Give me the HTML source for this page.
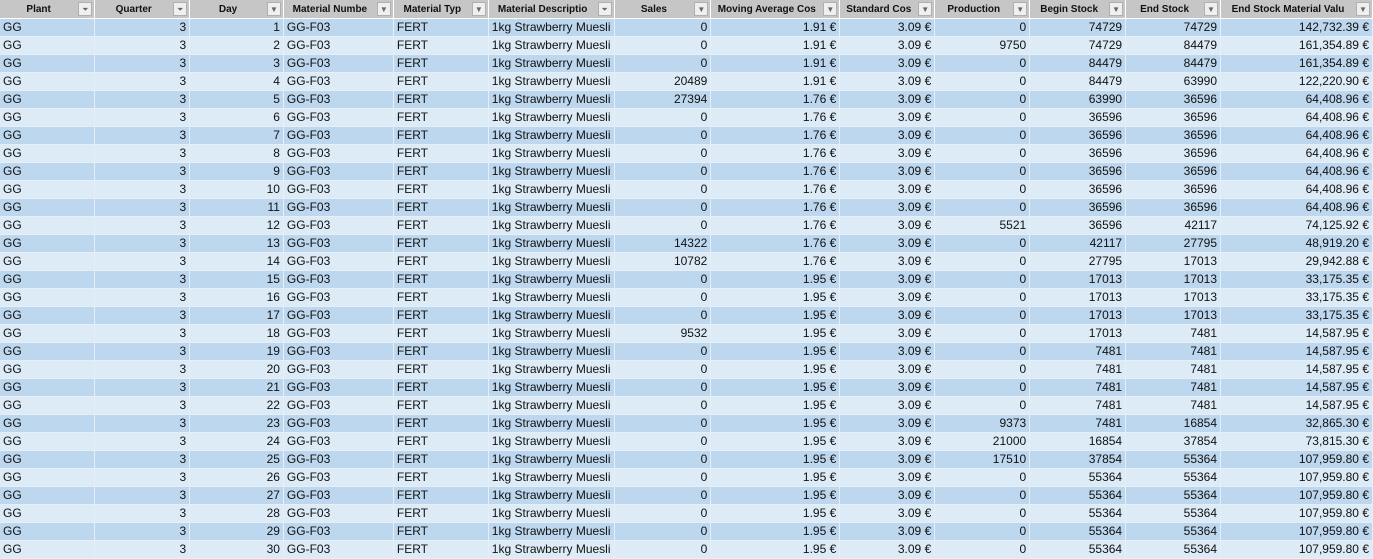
<!DOCTYPE html>
<html><head><meta charset="utf-8"><style>
body{margin:0;background:#fff;width:1373px;height:558px;overflow:hidden}
table{border-collapse:collapse;table-layout:fixed;font-family:"Liberation Sans",sans-serif;font-size:12px;color:#111}
td,th{height:17px;padding:0 3px;white-space:nowrap;overflow:hidden;border-right:1px solid #e6eef8;border-bottom:1px solid #e6eef8;line-height:17px}
th{background:#c6c6c6;font-weight:bold;font-size:10px;height:18px;text-align:center;position:relative;padding-right:20px;border-right:1px solid #fff;border-bottom:1px solid #fff}
th span{position:absolute;right:2px;top:2px;width:14px;height:14px;background:#efefef;border:1px solid #b0b0b0;box-sizing:border-box;font-size:8px;line-height:13px;text-align:center;color:#666;font-weight:normal}
tr:nth-child(even) td{background:#bdd7ee}
tr:nth-child(odd) td{background:#ddebf7}
.r{text-align:right}
</style></head><body>
<table>
<colgroup><col style="width:95px"><col style="width:95px"><col style="width:94px"><col style="width:110px"><col style="width:95px"><col style="width:125px"><col style="width:97px"><col style="width:129px"><col style="width:95px"><col style="width:95px"><col style="width:96px"><col style="width:95px"><col style="width:152px"></colgroup>
<tr><th>Plant<span>⏷</span></th><th>Quarter<span>⏷</span></th><th>Day<span>▼</span></th><th>Material Numbe<span>▼</span></th><th>Material Typ<span>▼</span></th><th>Material Descriptio<span>⏷</span></th><th>Sales<span>▼</span></th><th>Moving Average Cos<span>▼</span></th><th>Standard Cos<span>▼</span></th><th>Production<span>▼</span></th><th>Begin Stock<span>▼</span></th><th>End Stock<span>▼</span></th><th>End Stock Material Valu<span>▼</span></th></tr>
<tr><td>GG</td><td class="r">3</td><td class="r">1</td><td>GG-F03</td><td>FERT</td><td>1kg Strawberry Muesli</td><td class="r">0</td><td class="r">1.91 €</td><td class="r">3.09 €</td><td class="r">0</td><td class="r">74729</td><td class="r">74729</td><td class="r">142,732.39 €</td></tr>
<tr><td>GG</td><td class="r">3</td><td class="r">2</td><td>GG-F03</td><td>FERT</td><td>1kg Strawberry Muesli</td><td class="r">0</td><td class="r">1.91 €</td><td class="r">3.09 €</td><td class="r">9750</td><td class="r">74729</td><td class="r">84479</td><td class="r">161,354.89 €</td></tr>
<tr><td>GG</td><td class="r">3</td><td class="r">3</td><td>GG-F03</td><td>FERT</td><td>1kg Strawberry Muesli</td><td class="r">0</td><td class="r">1.91 €</td><td class="r">3.09 €</td><td class="r">0</td><td class="r">84479</td><td class="r">84479</td><td class="r">161,354.89 €</td></tr>
<tr><td>GG</td><td class="r">3</td><td class="r">4</td><td>GG-F03</td><td>FERT</td><td>1kg Strawberry Muesli</td><td class="r">20489</td><td class="r">1.91 €</td><td class="r">3.09 €</td><td class="r">0</td><td class="r">84479</td><td class="r">63990</td><td class="r">122,220.90 €</td></tr>
<tr><td>GG</td><td class="r">3</td><td class="r">5</td><td>GG-F03</td><td>FERT</td><td>1kg Strawberry Muesli</td><td class="r">27394</td><td class="r">1.76 €</td><td class="r">3.09 €</td><td class="r">0</td><td class="r">63990</td><td class="r">36596</td><td class="r">64,408.96 €</td></tr>
<tr><td>GG</td><td class="r">3</td><td class="r">6</td><td>GG-F03</td><td>FERT</td><td>1kg Strawberry Muesli</td><td class="r">0</td><td class="r">1.76 €</td><td class="r">3.09 €</td><td class="r">0</td><td class="r">36596</td><td class="r">36596</td><td class="r">64,408.96 €</td></tr>
<tr><td>GG</td><td class="r">3</td><td class="r">7</td><td>GG-F03</td><td>FERT</td><td>1kg Strawberry Muesli</td><td class="r">0</td><td class="r">1.76 €</td><td class="r">3.09 €</td><td class="r">0</td><td class="r">36596</td><td class="r">36596</td><td class="r">64,408.96 €</td></tr>
<tr><td>GG</td><td class="r">3</td><td class="r">8</td><td>GG-F03</td><td>FERT</td><td>1kg Strawberry Muesli</td><td class="r">0</td><td class="r">1.76 €</td><td class="r">3.09 €</td><td class="r">0</td><td class="r">36596</td><td class="r">36596</td><td class="r">64,408.96 €</td></tr>
<tr><td>GG</td><td class="r">3</td><td class="r">9</td><td>GG-F03</td><td>FERT</td><td>1kg Strawberry Muesli</td><td class="r">0</td><td class="r">1.76 €</td><td class="r">3.09 €</td><td class="r">0</td><td class="r">36596</td><td class="r">36596</td><td class="r">64,408.96 €</td></tr>
<tr><td>GG</td><td class="r">3</td><td class="r">10</td><td>GG-F03</td><td>FERT</td><td>1kg Strawberry Muesli</td><td class="r">0</td><td class="r">1.76 €</td><td class="r">3.09 €</td><td class="r">0</td><td class="r">36596</td><td class="r">36596</td><td class="r">64,408.96 €</td></tr>
<tr><td>GG</td><td class="r">3</td><td class="r">11</td><td>GG-F03</td><td>FERT</td><td>1kg Strawberry Muesli</td><td class="r">0</td><td class="r">1.76 €</td><td class="r">3.09 €</td><td class="r">0</td><td class="r">36596</td><td class="r">36596</td><td class="r">64,408.96 €</td></tr>
<tr><td>GG</td><td class="r">3</td><td class="r">12</td><td>GG-F03</td><td>FERT</td><td>1kg Strawberry Muesli</td><td class="r">0</td><td class="r">1.76 €</td><td class="r">3.09 €</td><td class="r">5521</td><td class="r">36596</td><td class="r">42117</td><td class="r">74,125.92 €</td></tr>
<tr><td>GG</td><td class="r">3</td><td class="r">13</td><td>GG-F03</td><td>FERT</td><td>1kg Strawberry Muesli</td><td class="r">14322</td><td class="r">1.76 €</td><td class="r">3.09 €</td><td class="r">0</td><td class="r">42117</td><td class="r">27795</td><td class="r">48,919.20 €</td></tr>
<tr><td>GG</td><td class="r">3</td><td class="r">14</td><td>GG-F03</td><td>FERT</td><td>1kg Strawberry Muesli</td><td class="r">10782</td><td class="r">1.76 €</td><td class="r">3.09 €</td><td class="r">0</td><td class="r">27795</td><td class="r">17013</td><td class="r">29,942.88 €</td></tr>
<tr><td>GG</td><td class="r">3</td><td class="r">15</td><td>GG-F03</td><td>FERT</td><td>1kg Strawberry Muesli</td><td class="r">0</td><td class="r">1.95 €</td><td class="r">3.09 €</td><td class="r">0</td><td class="r">17013</td><td class="r">17013</td><td class="r">33,175.35 €</td></tr>
<tr><td>GG</td><td class="r">3</td><td class="r">16</td><td>GG-F03</td><td>FERT</td><td>1kg Strawberry Muesli</td><td class="r">0</td><td class="r">1.95 €</td><td class="r">3.09 €</td><td class="r">0</td><td class="r">17013</td><td class="r">17013</td><td class="r">33,175.35 €</td></tr>
<tr><td>GG</td><td class="r">3</td><td class="r">17</td><td>GG-F03</td><td>FERT</td><td>1kg Strawberry Muesli</td><td class="r">0</td><td class="r">1.95 €</td><td class="r">3.09 €</td><td class="r">0</td><td class="r">17013</td><td class="r">17013</td><td class="r">33,175.35 €</td></tr>
<tr><td>GG</td><td class="r">3</td><td class="r">18</td><td>GG-F03</td><td>FERT</td><td>1kg Strawberry Muesli</td><td class="r">9532</td><td class="r">1.95 €</td><td class="r">3.09 €</td><td class="r">0</td><td class="r">17013</td><td class="r">7481</td><td class="r">14,587.95 €</td></tr>
<tr><td>GG</td><td class="r">3</td><td class="r">19</td><td>GG-F03</td><td>FERT</td><td>1kg Strawberry Muesli</td><td class="r">0</td><td class="r">1.95 €</td><td class="r">3.09 €</td><td class="r">0</td><td class="r">7481</td><td class="r">7481</td><td class="r">14,587.95 €</td></tr>
<tr><td>GG</td><td class="r">3</td><td class="r">20</td><td>GG-F03</td><td>FERT</td><td>1kg Strawberry Muesli</td><td class="r">0</td><td class="r">1.95 €</td><td class="r">3.09 €</td><td class="r">0</td><td class="r">7481</td><td class="r">7481</td><td class="r">14,587.95 €</td></tr>
<tr><td>GG</td><td class="r">3</td><td class="r">21</td><td>GG-F03</td><td>FERT</td><td>1kg Strawberry Muesli</td><td class="r">0</td><td class="r">1.95 €</td><td class="r">3.09 €</td><td class="r">0</td><td class="r">7481</td><td class="r">7481</td><td class="r">14,587.95 €</td></tr>
<tr><td>GG</td><td class="r">3</td><td class="r">22</td><td>GG-F03</td><td>FERT</td><td>1kg Strawberry Muesli</td><td class="r">0</td><td class="r">1.95 €</td><td class="r">3.09 €</td><td class="r">0</td><td class="r">7481</td><td class="r">7481</td><td class="r">14,587.95 €</td></tr>
<tr><td>GG</td><td class="r">3</td><td class="r">23</td><td>GG-F03</td><td>FERT</td><td>1kg Strawberry Muesli</td><td class="r">0</td><td class="r">1.95 €</td><td class="r">3.09 €</td><td class="r">9373</td><td class="r">7481</td><td class="r">16854</td><td class="r">32,865.30 €</td></tr>
<tr><td>GG</td><td class="r">3</td><td class="r">24</td><td>GG-F03</td><td>FERT</td><td>1kg Strawberry Muesli</td><td class="r">0</td><td class="r">1.95 €</td><td class="r">3.09 €</td><td class="r">21000</td><td class="r">16854</td><td class="r">37854</td><td class="r">73,815.30 €</td></tr>
<tr><td>GG</td><td class="r">3</td><td class="r">25</td><td>GG-F03</td><td>FERT</td><td>1kg Strawberry Muesli</td><td class="r">0</td><td class="r">1.95 €</td><td class="r">3.09 €</td><td class="r">17510</td><td class="r">37854</td><td class="r">55364</td><td class="r">107,959.80 €</td></tr>
<tr><td>GG</td><td class="r">3</td><td class="r">26</td><td>GG-F03</td><td>FERT</td><td>1kg Strawberry Muesli</td><td class="r">0</td><td class="r">1.95 €</td><td class="r">3.09 €</td><td class="r">0</td><td class="r">55364</td><td class="r">55364</td><td class="r">107,959.80 €</td></tr>
<tr><td>GG</td><td class="r">3</td><td class="r">27</td><td>GG-F03</td><td>FERT</td><td>1kg Strawberry Muesli</td><td class="r">0</td><td class="r">1.95 €</td><td class="r">3.09 €</td><td class="r">0</td><td class="r">55364</td><td class="r">55364</td><td class="r">107,959.80 €</td></tr>
<tr><td>GG</td><td class="r">3</td><td class="r">28</td><td>GG-F03</td><td>FERT</td><td>1kg Strawberry Muesli</td><td class="r">0</td><td class="r">1.95 €</td><td class="r">3.09 €</td><td class="r">0</td><td class="r">55364</td><td class="r">55364</td><td class="r">107,959.80 €</td></tr>
<tr><td>GG</td><td class="r">3</td><td class="r">29</td><td>GG-F03</td><td>FERT</td><td>1kg Strawberry Muesli</td><td class="r">0</td><td class="r">1.95 €</td><td class="r">3.09 €</td><td class="r">0</td><td class="r">55364</td><td class="r">55364</td><td class="r">107,959.80 €</td></tr>
<tr><td>GG</td><td class="r">3</td><td class="r">30</td><td>GG-F03</td><td>FERT</td><td>1kg Strawberry Muesli</td><td class="r">0</td><td class="r">1.95 €</td><td class="r">3.09 €</td><td class="r">0</td><td class="r">55364</td><td class="r">55364</td><td class="r">107,959.80 €</td></tr>
</table>
</body></html>
